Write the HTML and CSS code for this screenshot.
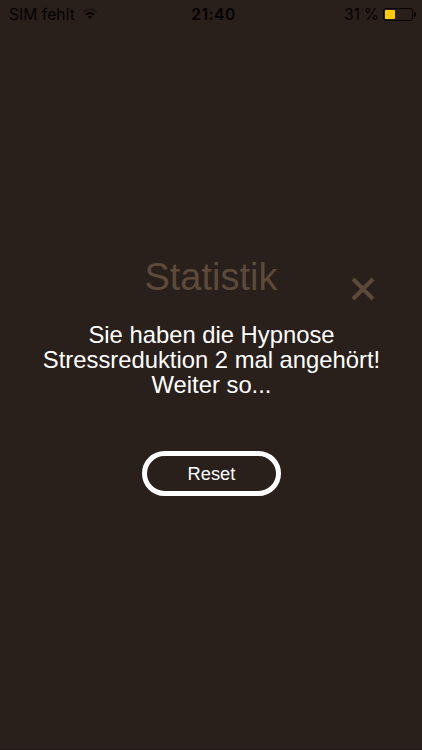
FILE: index.html
```html
<!DOCTYPE html>
<html lang="de">
<head>
<meta charset="UTF-8" />
<meta name="viewport" content="width=device-width, initial-scale=1" />
<title>Statistik</title>
<link rel="stylesheet" href="styles.css">
</head>
<body>

  <!-- Status bar -->
  <header class="status-bar">
    <div class="carrier">
      <span>SIM fehlt</span>
      <svg class="wifi" viewBox="0 0 16 12" width="16" height="12">
        <path d="M1.5 4.2 Q8 -1.4 14.5 4.2" fill="none" stroke="#1b1411" stroke-width="1.6" />
        <path d="M3.9 6.9 Q8 3.3 12.1 6.9" fill="none" stroke="#050302" stroke-width="1.9" />
        <path d="M5.7 8.6 Q8 6.8 10.3 8.6 L8 11 Z" fill="#050302" />
      </svg>
    </div>
    <div class="clock">21:40</div>
    <div class="power">
      <span>31 %</span>
      <div class="battery"><div class="level"></div></div>
      <div class="battery-tip"></div>
    </div>
  </header>

  <main class="stats">
    <div class="title-row">
      <h1>Statistik</h1>
      <button class="close-btn" aria-label="Schließen">
        <svg viewBox="0 0 24 24" width="24" height="24">
          <path d="M2 2 L22 22 M22 2 L2 22" stroke="#5c4a3a" stroke-width="3.9" />
        </svg>
      </button>
    </div>
    <p class="message">Sie haben die Hypnose<br>Stressreduktion 2 mal angehört!<br>Weiter so...</p>
    <button class="reset-btn">Reset</button>
  </main>

</body>
</html>
```
FILE: styles.css
```css
* {
  box-sizing: border-box;
}
body {
  font-family: "Liberation Sans", Arial, sans-serif;
  margin: 0;
  height: 100vh;
  background: #291f1b;
  border-bottom: 1px solid #22171a;
  color: #fff;
  overflow: hidden;
}
button {
  font-family: inherit;
  padding: 0;
  background: none;
  border: none;
  cursor: pointer;
}

/* Status bar */
.status-bar {
  display: grid;
  grid-template-columns: 1fr auto 1fr;
  align-items: center;
  height: 28px;
  padding: 0 6px 0 9px;
  font-family: Inter, sans-serif;
  font-size: 15.7px;
  color: #050302;
}
.carrier, .power {
  display: flex;
  align-items: center;
}
.wifi {
  margin-left: 7px;
}
.clock {
  padding-left: 2px;
  font-weight: 600;
  letter-spacing: 0.5px;
}
.power {
  justify-content: flex-end;
}
.power span {
  font-size: 15.2px;
}
.battery {
  width: 30px;
  height: 13px;
  margin-left: 4px;
  padding: 1px;
  border: 1px solid #050302;
  border-radius: 3px;
}
.level {
  width: 10px;
  height: 100%;
  background: #ffcc05;
  border-radius: 1px;
}
.battery-tip {
  width: 2px;
  height: 5px;
  margin-left: 1px;
  background: #050302;
  border-radius: 0 2px 2px 0;
}

/* Statistics */
.stats {
  display: flex;
  flex-direction: column;
  align-items: center;
  padding-top: 227px;
}
.title-row {
  display: grid;
  grid-template-columns: 1fr auto 1fr;
  width: 100%;
  height: 44px;
}
h1 {
  grid-column: 2;
  margin: 0;
  font-size: 38px;
  font-weight: normal;
  line-height: 44px;
  color: #5c4a3a;
}
.close-btn {
  justify-self: end;
  width: 24px;
  height: 24px;
  margin: 22px 47px 0 0;
}
.close-btn svg {
  display: block;
}
.message {
  margin: 23px 0 0;
  padding-left: 1px;
  font-size: 23.8px;
  line-height: 25px;
  text-align: center;
  white-space: nowrap;
}
.reset-btn {
  width: 139px;
  height: 45px;
  margin-top: 54px;
  padding: 1px 0 0 1px;
  border: 5px solid #fff;
  border-radius: 23px;
  font-size: 18.3px;
  color: #fff;
}
```
